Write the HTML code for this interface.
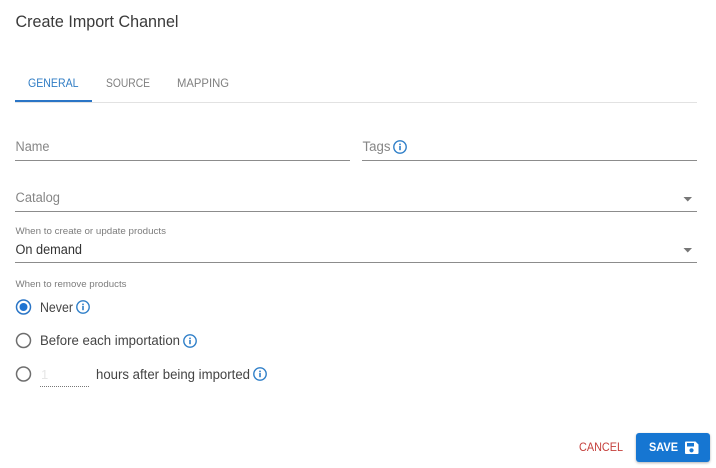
<!DOCTYPE html>
<html><head><meta charset="utf-8"><style>
html,body{margin:0;padding:0;background:#fff;width:716px;height:468px;overflow:hidden}
svg{display:block;font-family:"Liberation Sans",sans-serif}
.i circle{fill:none;stroke:#2f7fc8;stroke-width:1.4}
.i rect{fill:#2f7fc8}
</style></head><body>
<svg width="716" height="468" viewBox="0 0 716 468" xmlns="http://www.w3.org/2000/svg">
<defs>
<filter id="s" x="-10%" y="-20%" width="120%" height="150%"><feDropShadow dx="0" dy="1" stdDeviation="1.2" flood-color="#000" flood-opacity=".3"/></filter>
<g id="info" class="i"><circle cx="0" cy="0" r="6.200"/><rect x="-.8" y="-3.400" width="1.600" height="1.600"/><rect x="-.8" y="-1" width="1.600" height="4.200"/></g>
</defs>
<text x="15.500" y="27" font-size="16.500" fill="#3a3a3a" textLength="163" lengthAdjust="spacingAndGlyphs">Create Import Channel</text>

<text x="28" y="87" font-size="11.500" fill="#2f7cc4" textLength="50.500" lengthAdjust="spacingAndGlyphs">GENERAL</text>
<text x="106" y="87" font-size="11.500" fill="#808080" textLength="44" lengthAdjust="spacingAndGlyphs">SOURCE</text>
<text x="177" y="87" font-size="11.500" fill="#808080" textLength="52" lengthAdjust="spacingAndGlyphs">MAPPING</text>
<rect x="15" y="102" width="682" height="1" fill="#e2e2e2"/>
<rect x="15" y="100" width="77" height="2" fill="#2a75c6"/>

<text x="15.500" y="151" font-size="13.500" fill="#868686" textLength="34" lengthAdjust="spacingAndGlyphs">Name</text>
<rect x="15" y="160" width="335" height="1" fill="#8c8c8c"/>
<text x="362.500" y="151" font-size="13.500" fill="#868686" textLength="28" lengthAdjust="spacingAndGlyphs">Tags</text>
<use href="#info" x="400" y="147"/>
<rect x="362" y="160" width="335" height="1" fill="#8c8c8c"/>

<text x="15.500" y="202" font-size="13.500" fill="#868686" textLength="44.500" lengthAdjust="spacingAndGlyphs">Catalog</text>
<path d="M683.500 197h8.500l-4.250 4.500z" fill="#777"/>
<rect x="15" y="211" width="682" height="1" fill="#8c8c8c"/>

<text x="15.500" y="234" font-size="9.500" fill="#7c7c7c" textLength="150.500" lengthAdjust="spacingAndGlyphs">When to create or update products</text>
<text x="15.500" y="254" font-size="13.500" fill="#333" textLength="66.500" lengthAdjust="spacingAndGlyphs">On demand</text>
<path d="M683.500 248h8.500l-4.250 4.500z" fill="#777"/>
<rect x="15" y="262" width="682" height="1" fill="#8c8c8c"/>

<text x="15.500" y="287" font-size="9.500" fill="#7c7c7c" textLength="111" lengthAdjust="spacingAndGlyphs">When to remove products</text>

<circle cx="23.500" cy="307" r="7" fill="none" stroke="#2a75c6" stroke-width="1.500"/>
<circle cx="23.500" cy="307" r="4" fill="#1f74d2"/>
<text x="40" y="312" font-size="13.500" fill="#444" textLength="33" lengthAdjust="spacingAndGlyphs">Never</text>
<use href="#info" x="83" y="307"/>

<circle cx="23.500" cy="340.500" r="7" fill="none" stroke="#6e6e6e" stroke-width="1.500"/>
<text x="40" y="345" font-size="13.500" fill="#444" textLength="140" lengthAdjust="spacingAndGlyphs">Before each importation</text>
<use href="#info" x="190" y="341"/>

<circle cx="23.500" cy="374" r="7" fill="none" stroke="#6e6e6e" stroke-width="1.500"/>
<text x="41" y="379" font-size="13" fill="#e6e6e6">1</text>
<line x1="40" y1="386.500" x2="90" y2="386.500" stroke="#777" stroke-width="1" stroke-dasharray="1 1"/>
<text x="96" y="379" font-size="13.500" fill="#444" textLength="154" lengthAdjust="spacingAndGlyphs">hours after being imported</text>
<use href="#info" x="260" y="374"/>

<text x="579" y="451" font-size="11.500" fill="#c5403c" textLength="44" lengthAdjust="spacingAndGlyphs">CANCEL</text>
<rect x="636" y="433" width="74" height="29" rx="3" fill="#1976d2" filter="url(#s)"/>
<text x="649" y="451" font-size="11.500" font-weight="bold" fill="#fff" textLength="29" lengthAdjust="spacingAndGlyphs">SAVE</text>
<path fill-rule="evenodd" d="M686 441.500h9.500l3 3v8.500a1 1 0 0 1-1 1h-11.500a1 1 0 0 1-1-1v-10.500a1 1 0 0 1 1-1zM687 443v3.500h7v-3.500zM691.500 448.200a2.100 2.100 0 1 0 .01 0z" fill="#fff"/>
</svg>
</body></html>
